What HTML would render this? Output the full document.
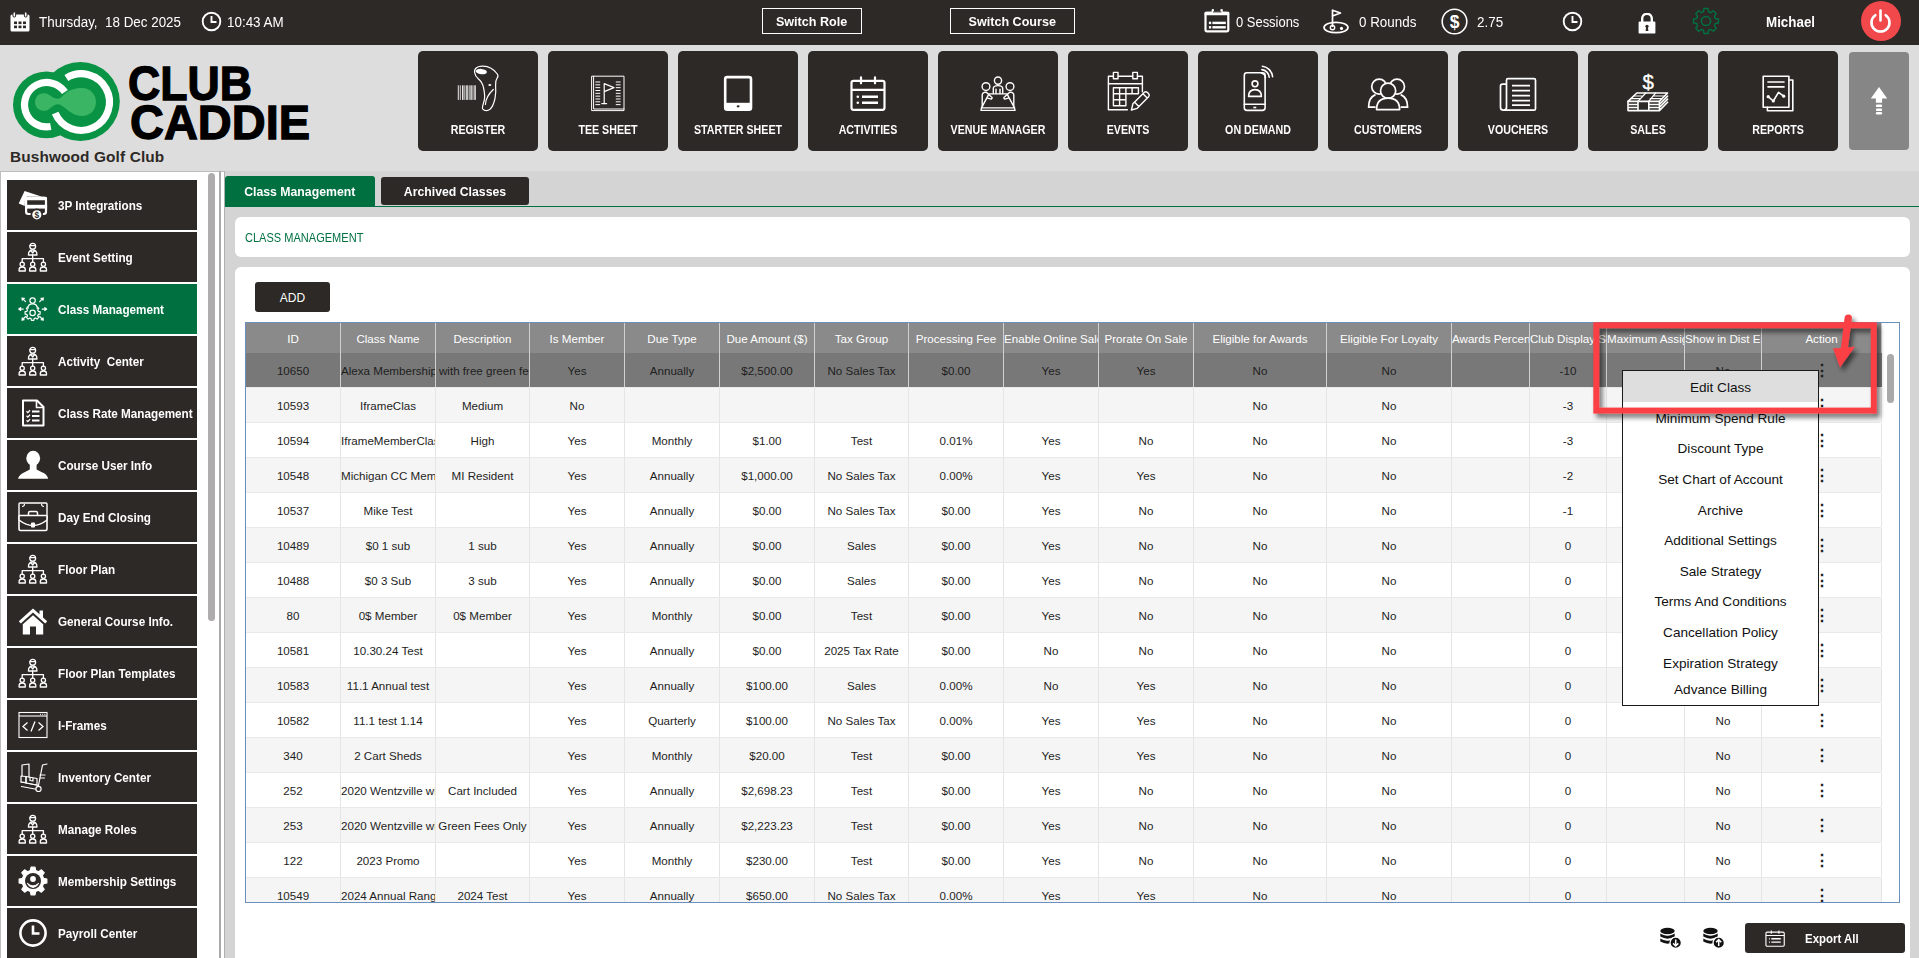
<!DOCTYPE html><html lang="en"><head><meta charset="utf-8"><title>Club Caddie - Class Management</title><style>
*{box-sizing:border-box;margin:0;padding:0}
html,body{width:1919px;height:958px;overflow:hidden}
body{background:#dddddd;font-family:"Liberation Sans",sans-serif;color:#1e1e1e;position:relative}
.abs{position:absolute}
.topbar{position:absolute;left:0;top:0;width:1919px;height:45px;background:#2d2926;color:#fff}
.tb-t{position:absolute;top:0;height:45px;line-height:45px;font-size:14px;color:#fff;white-space:pre;transform:scaleX(.957);transform-origin:0 50%}
.tb-btn{position:absolute;top:8px;height:26px;border:1px solid #fff;color:#fff;font-weight:700;font-size:13.6px;text-align:center;line-height:26px;white-space:nowrap}
.tb-btn span{display:inline-block;transform:scaleX(.925)}
.nav{position:absolute;top:51px;width:120px;height:100px;background:#2d2926;border-radius:5px;color:#fff}
.nav span{position:absolute;left:-20px;right:-20px;top:71px;text-align:center;font-size:13px;font-weight:700;line-height:16px;transform:scaleX(.82)}
.nav svg{position:absolute;left:0;top:0}
.side{position:absolute;left:0;top:171px;width:224px;height:790px;background:#fff;border:1px solid #bdbdbd;border-right:none}
.si{position:absolute;left:7px;width:190px;height:50px;background:#2d2926;color:#fff;font-weight:700;font-size:13px;line-height:51px;padding-left:51px;white-space:nowrap}
.si.act{background:#007041}
.si svg{position:absolute;left:11px;top:10px}
.si b{display:inline-block;transform:scaleX(.9);transform-origin:0 50%}
.content{position:absolute;left:225px;top:171px;width:1694px;height:787px;background:#d4d4d4}
.tab span{display:inline-block;transform:scaleX(.93)}
.tab{position:absolute;top:176px;height:31px;color:#fff;font-weight:700;white-space:nowrap;font-size:13.2px;line-height:32px;text-align:center;border-radius:3px 3px 0 0}
.panel{position:absolute;background:#fff;border-radius:6px}
table{border-collapse:collapse}
.grid{position:absolute;left:245px;top:322px;width:1655px;height:581px;border:1px solid #6c8fbe;background:#fff;overflow:hidden}
.row{position:absolute;left:0;height:35px;width:1635px}
.c{position:absolute;top:0;height:100%;overflow:hidden;white-space:nowrap;font-size:11.6px;text-align:center;border-right:1px solid #e5e5e5}
.c i{font-style:normal;display:inline-block;min-width:100%;text-align:center}
.hdr .c{color:#fff;border-right:1px solid #d0d0d0;font-size:11.6px}
.menu{position:absolute;left:1622px;top:370px;width:197px;height:336px;background:#fff;border:1px solid #1a1a1a}
.mi{position:absolute;left:0;width:195px;text-align:center;font-size:13.6px;color:#111;height:30px;line-height:32px}
</style></head><body>
<div class="topbar">
<svg class="abs" style="left:10px;top:12px" width="20" height="20" viewBox="0 0 20 20"><rect x="0.5" y="2.5" width="19" height="17" rx="1.5" fill="#fff"/><rect x="3" y="0" width="2.6" height="5" rx="1" fill="#fff" stroke="#2d2926" stroke-width="1"/><rect x="14.4" y="0" width="2.6" height="5" rx="1" fill="#fff" stroke="#2d2926" stroke-width="1"/><g fill="#2d2926"><rect x="4" y="9.5" width="3" height="2.6"/><rect x="8.5" y="9.5" width="3" height="2.6"/><rect x="13" y="9.5" width="3" height="2.6"/><rect x="4" y="13.6" width="3" height="2.6"/><rect x="8.5" y="13.6" width="3" height="2.6"/><rect x="13" y="13.6" width="3" height="2.6"/></g></svg>
<div class="tb-t" style="left:39px">Thursday,  18 Dec 2025</div>
<svg class="abs" style="left:201px;top:11px" width="21" height="21" viewBox="0 0 21 21"><circle cx="10.5" cy="10.5" r="8.8" fill="none" stroke="#fff" stroke-width="1.9"/><path d="M10.5 5 V11 H15.5" fill="none" stroke="#fff" stroke-width="1.9"/></svg>
<div class="tb-t" style="left:227px">10:43 AM</div>
<div class="tb-btn" style="left:762px;width:100px"><span>Switch Role</span></div>
<div class="tb-btn" style="left:950px;width:125px"><span>Switch Course</span></div>
<svg class="abs" style="left:1203px;top:9px" width="27" height="24" viewBox="0 0 27 24"><rect x="2.5" y="3.8" width="22.8" height="18.6" rx="1.6" fill="none" stroke="#fff" stroke-width="2.2"/><rect x="1.5" y="2.7" width="24.8" height="3.6" rx="1" fill="#fff"/><rect x="8.6" y="0" width="2.4" height="5.6" rx="1" fill="#fff"/><rect x="17.4" y="0" width="2.4" height="5.6" rx="1" fill="#fff"/><path d="M10 2.9 H18.4" stroke="#2d2926" stroke-width="1"/><rect x="5.9" y="12.7" width="2.3" height="2.4" fill="#fff"/><rect x="9.4" y="12.7" width="13.4" height="2.4" fill="#fff"/><rect x="5.9" y="17.1" width="2.3" height="2.4" fill="#fff"/><rect x="9.4" y="17.1" width="13.4" height="2.4" fill="#fff"/></svg>
<div class="tb-t" style="left:1236px;transform:scaleX(.925)">0 Sessions</div>
<svg class="abs" style="left:1322px;top:9px" width="28" height="25" viewBox="0 0 28 25"><ellipse cx="14" cy="18.5" rx="12" ry="5.2" fill="none" stroke="#fff" stroke-width="1.7"/><path d="M10.5 18 V1.2 L18.5 4 L10.5 7" fill="none" stroke="#fff" stroke-width="1.7" stroke-linejoin="round"/><circle cx="10.5" cy="18.6" r="2.2" fill="none" stroke="#fff" stroke-width="1.4"/><circle cx="19.5" cy="19.4" r="1.6" fill="#fff"/></svg>
<div class="tb-t" style="left:1359px">0 Rounds</div>
<svg class="abs" style="left:1441px;top:8px" width="27" height="27" viewBox="0 0 27 27"><circle cx="13.5" cy="13.5" r="12.3" fill="none" stroke="#fff" stroke-width="1.6"/><text x="13.5" y="19.8" text-anchor="middle" font-family="Liberation Sans,sans-serif" font-weight="700" font-size="17.5" fill="#fff">$</text></svg>
<div class="tb-t" style="left:1477px">2.75</div>
<svg class="abs" style="left:1562px;top:11px" width="21" height="21" viewBox="0 0 21 21"><circle cx="10.5" cy="10.5" r="8.8" fill="none" stroke="#fff" stroke-width="1.9"/><path d="M10.5 5 V11 H15.5" fill="none" stroke="#fff" stroke-width="1.9"/></svg>
<svg class="abs" style="left:1638px;top:13px" width="18" height="21" viewBox="0 0 18 21"><path d="M4.2 9 V5.6 A4.8 4.8 0 0 1 13.8 5.6 V9" fill="none" stroke="#fff" stroke-width="2.4"/><rect x="0.6" y="8.6" width="16.8" height="12" rx="1.2" fill="#fff"/><circle cx="9" cy="13.3" r="1.6" fill="#2d2926"/><path d="M8.2 13.5 L7.6 18 H10.4 L9.8 13.5 Z" fill="#2d2926"/></svg>
<svg class="abs" style="left:1692px;top:7px" width="28" height="28" viewBox="0 0 28 28"><path d="M11.39 4.76 L11.93 1.57 L16.07 1.57 L16.61 4.76 L18.69 5.62 L21.33 3.75 L24.25 6.67 L22.38 9.31 L23.24 11.39 L26.43 11.93 L26.43 16.07 L23.24 16.61 L22.38 18.69 L24.25 21.33 L21.33 24.25 L18.69 22.38 L16.61 23.24 L16.07 26.43 L11.93 26.43 L11.39 23.24 L9.31 22.38 L6.67 24.25 L3.75 21.33 L5.62 18.69 L4.76 16.61 L1.57 16.07 L1.57 11.93 L4.76 11.39 L5.62 9.31 L3.75 6.67 L6.67 3.75 L9.31 5.62 Z" fill="none" stroke="#007041" stroke-width="1.5" stroke-linejoin="round"/><circle cx="14" cy="14" r="4.6" fill="none" stroke="#007041" stroke-width="1.5"/></svg>
<div class="tb-t" style="left:1766px;font-weight:700;transform:scaleX(.955)">Michael</div>
<div class="abs" style="left:1860.5px;top:1px;width:40px;height:40px;border-radius:50%;background:#f1484c"></div>
<svg class="abs" style="left:1869px;top:8.5px" width="23" height="24" viewBox="0 0 23 24"><path d="M6.3 6.2 A9 9 0 1 0 16.7 6.2" fill="none" stroke="#fff" stroke-width="2.6" stroke-linecap="round"/><path d="M11.5 1.6 V11.5" stroke="#fff" stroke-width="2.6" stroke-linecap="round"/></svg>
</div>
<svg class="abs" style="left:0;top:50px" width="330" height="100" viewBox="0 50 330 100">
<circle cx="46.4" cy="104.8" r="33.4" fill="#099345"/><circle cx="80.3" cy="101.5" r="39.5" fill="#099345"/>
<path d="M64.89 91.97 A22.2 22.2 0 1 0 50.75 126.53" fill="none" stroke="#fff" stroke-width="7.2"/>
<path d="M66.37 78 A28.3 28.3 0 1 1 55.15 113.16" fill="none" stroke="#fff" stroke-width="7.2"/>
<path d="M35 102 C35 95.5 41 92 46.5 93.5 C51 95 53 99 58 98.7 C63 98.5 65 88 82 88 C91 88 96 95 96 102 C96 109 91 116 82 116 C70 116 64 104.5 58 104.3 C53 104.3 51 109 46.5 110.5 C41 112 35 108.5 35 102 Z" fill="#3ab564"/>
<g font-family="Liberation Sans,sans-serif" font-weight="700" font-size="49" fill="#000" stroke="#000" stroke-width="1.3">
<text x="128" y="99.5" textLength="124" lengthAdjust="spacingAndGlyphs">CLUB</text>
<text x="130" y="139.3" textLength="180" lengthAdjust="spacingAndGlyphs">CADDIE</text></g>
</svg>
<div class="abs" style="left:10px;top:147px;font-size:15.4px;font-weight:700;color:#2d2926;line-height:20px;letter-spacing:0.12px">Bushwood Golf Club</div>
<div class="nav" style="left:418px"><svg width="120" height="100" viewBox="0 0 120 100"><g fill="#e8e8e8"><rect x="39.8" y="34.3" width="1" height="14.6"/><rect x="41.8" y="34.3" width="0.9" height="14.6"/><rect x="44" y="34.3" width="1.5" height="14.6"/><rect x="46.4" y="34.3" width="0.9" height="14.6"/><rect x="48.2" y="34.3" width="1.6" height="14.6"/><rect x="50.7" y="34.3" width="0.9" height="14.6"/><rect x="52.4" y="34.3" width="1.4" height="14.6"/><rect x="54.5" y="34.3" width="0.9" height="14.6"/><rect x="56.3" y="34.3" width="1.5" height="14.6"/></g><path d="M56.6 21.5 C56 17.5 59.5 15 65 15.2 C71 15.4 76 18.5 79.3 23 C80.5 24.6 80 26 79 27.3 C77.6 29.2 77.4 31 77.6 34 C77.9 38 78.2 42 77 47.5 C76 52 74.5 56 72 58.3 C70 60 66.5 60.2 64.8 58.2 C63.6 56.6 65.2 53.5 66.2 49.5 C67 46 66.6 41.5 65.6 37 C64.8 33 63 30 60.5 28 C58.5 26.2 57 24.5 56.6 21.5 Z" fill="none" stroke="#fff" stroke-width="1.2" stroke-linejoin="round" stroke-linecap="round"/><ellipse cx="63.3" cy="20.6" rx="5.6" ry="2.7" fill="#fff" transform="rotate(6 63.3 20.6)"/><ellipse cx="71.8" cy="34" rx="1.5" ry="1.1" fill="#fff"/><path d="M75.3 38.5 C71 42.5 67.8 47 67.4 53.5" fill="none" stroke="#fff" stroke-width="1.2" stroke-linejoin="round" stroke-linecap="round"/></svg><span>REGISTER</span></div>
<div class="nav" style="left:548px"><svg width="120" height="100" viewBox="0 0 120 100"><rect x="44" y="25.2" width="32" height="34.4" fill="none" stroke="#fff" stroke-width="1" stroke-linejoin="round" stroke-linecap="round"/><path d="M45.6 25.2 V58 H76" fill="none" stroke="#fff" stroke-width="1" stroke-linejoin="round" stroke-linecap="round"/><path d="M56.2 52.5 V32.6 L66 36.6 L56.2 40.6 M53.8 52.6 H58.6" fill="none" stroke="#fff" stroke-width="1.2" stroke-linejoin="round" stroke-linecap="round"/><g stroke="#fff" stroke-width="1"><path d="M47.4 31 h4.8 M67.8 31 h4.8"/><path d="M47.4 33.83 h4.8 M67.8 33.83 h4.8"/><path d="M47.4 36.66 h4.8 M67.8 36.66 h4.8"/><path d="M47.4 39.49 h4.8 M67.8 39.49 h4.8"/><path d="M47.4 42.32 h4.8 M67.8 42.32 h4.8"/><path d="M47.4 45.15 h4.8 M67.8 45.15 h4.8"/><path d="M47.4 47.98 h4.8 M67.8 47.98 h4.8"/><path d="M47.4 50.81 h4.8 M67.8 50.81 h4.8"/><path d="M47.4 53.64 h4.8 M67.8 53.64 h4.8"/></g></svg><span>TEE SHEET</span></div>
<div class="nav" style="left:678px"><svg width="120" height="100" viewBox="0 0 120 100"><rect x="47.2" y="26.1" width="25.8" height="32.6" rx="2" fill="none" stroke="#fff" stroke-width="2.6"/><rect x="47.2" y="51.8" width="25.8" height="7" fill="#fff"/><ellipse cx="60.1" cy="55.3" rx="1.5" ry="1.1" fill="#2d2926"/></svg><span>STARTER SHEET</span></div>
<div class="nav" style="left:808px"><svg width="120" height="100" viewBox="0 0 120 100"><g transform="translate(40,20.3) scale(1,1)"><rect x="3.5" y="9.5" width="33" height="29" rx="2" fill="none" stroke="#fff" stroke-width="2.2"/><path d="M3.5 18.5 H36.5" stroke="#fff" stroke-width="2.2"/><path d="M13 6 V12 M27 6 V12" stroke="#fff" stroke-width="2.2" stroke-linecap="round"/><path d="M14 25.5 H30 M14 31.5 H30" stroke="#fff" stroke-width="2.4"/><circle cx="9.8" cy="25.5" r="1.3" fill="#fff"/><circle cx="9.8" cy="31.5" r="1.3" fill="#fff"/></g></svg><span>ACTIVITIES</span></div>
<div class="nav" style="left:938px"><svg width="120" height="100" viewBox="0 0 120 100"><g transform="translate(40,20.6) scale(1,1)"><circle cx="20" cy="9" r="3.6" fill="none" stroke="#fff" stroke-width="1.4" stroke-linejoin="round" stroke-linecap="round"/><circle cx="8" cy="15" r="3.9" fill="none" stroke="#fff" stroke-width="1.4" stroke-linejoin="round" stroke-linecap="round"/><circle cx="32" cy="15" r="3.9" fill="none" stroke="#fff" stroke-width="1.4" stroke-linejoin="round" stroke-linecap="round"/><path d="M15.3 22 V17 Q15.3 14 20 14 Q24.7 14 24.7 17 V22 M18 22 V17.5 M22 22 V17.5" fill="none" stroke="#fff" stroke-width="1.4" stroke-linejoin="round" stroke-linecap="round"/><path d="M4.2 35 V24 Q4.2 20.5 8 20.5 L13 25 Q15 26 13.5 27.5 L9.5 26.5 M35.8 35 V24 Q35.8 20.5 32 20.5 L27 25 Q25 26 26.5 27.5 L30.5 26.5" fill="none" stroke="#fff" stroke-width="1.4" stroke-linejoin="round" stroke-linecap="round"/><path d="M11 22.3 H29 L36.5 36.3 H3.5 Z" fill="none" stroke="#fff" stroke-width="1.4" stroke-linejoin="round" stroke-linecap="round"/><path d="M3.5 36.3 L3 38.8 H37 L36.5 36.3" fill="none" stroke="#fff" stroke-width="1.4" stroke-linejoin="round" stroke-linecap="round"/></g></svg><span>VENUE MANAGER</span></div>
<div class="nav" style="left:1068px"><svg width="120" height="100" viewBox="0 0 120 100"><g transform="translate(38.4,19.8) scale(1,1)"><path d="M36 21 V5.5 H2 V39 H21" fill="none" stroke="#fff" stroke-width="1.4" stroke-linejoin="round" stroke-linecap="round"/><path d="M2 13 H36" fill="none" stroke="#fff" stroke-width="1.4" stroke-linejoin="round" stroke-linecap="round"/><rect x="7" y="1.6" width="4.6" height="6.4" fill="#2d2926"  stroke="#fff" stroke-width="1.4" stroke-linejoin="round" stroke-linecap="round"/><rect x="26.4" y="1.6" width="4.6" height="6.4" fill="#2d2926"  stroke="#fff" stroke-width="1.4" stroke-linejoin="round" stroke-linecap="round"/><path d="M7 17 H32 V23 H19.5 V35 H7 Z M7 23 H19.5 M7 29 H19.5 M13.2 17 V35 M19.5 17 V23 M25.7 17 V23" fill="none" stroke="#fff" stroke-width="1.4" stroke-linejoin="round" stroke-linecap="round"/><path d="M26.5 33 L38 21.5 Q39.5 20.3 41 21.7 L42.3 23 Q43.5 24.5 42.2 26 L30.8 37.5 L25 39.2 Z M28.3 31.4 L32.4 35.6 M36.6 23 L40.8 27.2" fill="none" stroke="#fff" stroke-width="1.4" stroke-linejoin="round" stroke-linecap="round"/></g></svg><span>EVENTS</span></div>
<div class="nav" style="left:1198px"><svg width="120" height="100" viewBox="0 0 120 100"><rect x="46.3" y="21.8" width="20.8" height="37.6" rx="2.6" fill="none" stroke="#fff" stroke-width="1.6" stroke-linejoin="round" stroke-linecap="round"/><path d="M46.3 53.3 H67.1" fill="none" stroke="#fff" stroke-width="1.6" stroke-linejoin="round" stroke-linecap="round"/><path d="M55.3 56.5 H58.3" stroke="#fff" stroke-width="1.6"/><circle cx="57" cy="32.8" r="2.9" fill="none" stroke="#fff" stroke-width="1.6" stroke-linejoin="round" stroke-linecap="round"/><path d="M50.6 45.4 Q50.6 38.6 57 38.6 Q63.4 38.6 63.4 45.4 Z" fill="none" stroke="#fff" stroke-width="1.6" stroke-linejoin="round" stroke-linecap="round"/><path d="M63.6 22.3 A4.6 4.6 0 0 1 67.4 26.8 M63.9 18.6 A8.3 8.3 0 0 1 71.2 26.2 M64.4 15.2 A11.8 11.8 0 0 1 74.6 25.6" fill="none" stroke="#fff" stroke-width="1.6" stroke-linejoin="round" stroke-linecap="round"/></svg><span>ON DEMAND</span></div>
<div class="nav" style="left:1328px"><svg width="120" height="100" viewBox="0 0 120 100"><circle cx="51.2" cy="35.6" r="7.5" fill="#2d2926" stroke="#fff" stroke-width="1.7" stroke-linejoin="round"/><circle cx="69" cy="35.6" r="7.5" fill="#2d2926" stroke="#fff" stroke-width="1.7" stroke-linejoin="round"/><path d="M47.5 56.2 H40.6 Q40.6 46.5 47.5 43.6 M72.7 56.2 H79.6 Q79.6 46.5 72.7 43.6" fill="none" stroke="#fff" stroke-width="1.7" stroke-linejoin="round"/><circle cx="60.1" cy="39.8" r="7.6" fill="#2d2926" stroke="#fff" stroke-width="1.7" stroke-linejoin="round"/><path d="M48.6 58.6 Q48.6 47.2 60.1 47.2 Q71.6 47.2 71.6 58.6 Z" fill="#2d2926" stroke="#fff" stroke-width="1.7" stroke-linejoin="round"/></svg><span>CUSTOMERS</span></div>
<div class="nav" style="left:1458px"><svg width="120" height="100" viewBox="0 0 120 100"><g transform="translate(40,21.2) scale(1,1)"><path d="M8 12 H4.5 Q2.5 12 2.5 14 V35 Q2.5 38 5.5 38 Q8.5 38 8.5 35 V8 Q8.5 6.5 10 6.5 H36 Q37.5 6.5 37.5 8 V36.5 Q37.5 38 36 38 H5.5" fill="none" stroke="#fff"  stroke-linejoin="round" stroke-linecap="round" stroke-width="1.7"/><path d="M14 13.5 H32 M14 18.5 H32 M14 23.5 H32 M14 28.5 H32 M14 33 H32" stroke="#fff" stroke-width="1.7"/></g></svg><span>VOUCHERS</span></div>
<div class="nav" style="left:1588px"><svg width="120" height="100" viewBox="0 0 120 100"><text x="60.3" y="38" text-anchor="middle" font-family="Liberation Sans,sans-serif" font-size="20.5" fill="#fff" stroke="#fff" stroke-width="0.35">$</text><path d="M48.8 42 H79.6 L71.4 50.4 H40 Z" fill="none" stroke="#fff" stroke-width="1.6" stroke-linejoin="round" stroke-linecap="round"/><path d="M57.8 42 L50 50.4 M67.6 42 L60.8 50.4 M46 45 H55 M43.4 47.7 H52.4 M64.8 45 H76.6 M62.2 47.7 H74" fill="none" stroke="#fff" stroke-width="1.2" stroke-linejoin="round" stroke-linecap="round"/><path d="M40 50.4 V59.6 H71.4 L79.6 51.2 M40 53.5 H50 M40 56.5 H50 M60.8 53.5 H71.4 L79.6 45.1 M60.8 56.5 H71.4 L79.6 48.1 M50 50.4 V59.6 M60.8 50.4 V59.6 M71.4 50.4 V59.6" fill="none" stroke="#fff" stroke-width="1.6" stroke-linejoin="round" stroke-linecap="round"/></svg><span>SALES</span></div>
<div class="nav" style="left:1718px"><svg width="120" height="100" viewBox="0 0 120 100"><path d="M49.4 56.2 V59.8 H74.8 V29 H71" fill="none" stroke="#fff" stroke-width="1.6" stroke-linejoin="round" stroke-linecap="round"/><rect x="45.2" y="25.2" width="25.7" height="31" fill="none" stroke="#fff" stroke-width="1.6" stroke-linejoin="round" stroke-linecap="round"/><path d="M49.4 31 H66.6 M49.4 35.9 H66.6" stroke="#fff" stroke-width="1.6"/><path d="M50.2 45.7 L55.3 50 L60.5 41.4 L65.7 45.2" fill="none" stroke="#fff" stroke-width="1.6" stroke-linejoin="round" stroke-linecap="round"/><circle cx="50.2" cy="45.7" r="1.6" fill="#fff"/><circle cx="55.3" cy="50" r="1.6" fill="#fff"/><circle cx="65.7" cy="45.2" r="1.6" fill="#fff"/></svg><span>REPORTS</span></div>
<div class="abs" style="left:1849px;top:52px;width:60px;height:98px;background:#868686;border-radius:4px"></div>
<svg class="abs" style="left:1869px;top:86px" width="20" height="30" viewBox="0 0 20 30"><path d="M10 0.9 L18.2 12.4 H13.1 V16.8 H6.9 V12.4 H1.8 Z" fill="#fff"/><rect x="6.9" y="18.6" width="6.2" height="2.5" rx="1.2" fill="#fff"/><rect x="6.9" y="22.4" width="6.2" height="2.5" rx="1.2" fill="#fff"/><rect x="6.9" y="26" width="6.2" height="2.5" rx="1.2" fill="#fff"/></svg>
<div class="side"></div>
<div class="si" style="top:180px"><svg width="30" height="30" viewBox="0 0 30 30"><path d="M0.7 13.4 L6.6 0.9 L24.1 6.7 L9 6.5 L7 8.5 L6.8 16 Z" fill="#fff"/><rect x="8.1" y="7.8" width="19.9" height="16.2" rx="2.2" fill="none" stroke="#fff" stroke-width="2.2"/><rect x="7" y="6.7" width="22.1" height="3.6" rx="1.5" fill="#fff"/><rect x="7" y="14.8" width="22.1" height="3.8" fill="#fff"/><circle cx="18.8" cy="24.8" r="6.2" fill="#2d2926"/><circle cx="18.8" cy="24.8" r="4.6" fill="#fff"/><text x="18.8" y="27.8" text-anchor="middle" font-family="Liberation Sans,sans-serif" font-weight="700" font-size="8.4" fill="#2d2926">$</text></svg><b>3P Integrations</b></div>
<div class="si" style="top:232px"><svg width="30" height="30" viewBox="0 0 30 30"><circle cx="14.7" cy="4.3" r="2.9" fill="none" stroke="#fff" stroke-width="1.3" stroke-linejoin="round" stroke-linecap="round"/><path d="M12 3.6 H17.4" fill="none" stroke="#fff" stroke-width="1.3" stroke-linejoin="round" stroke-linecap="round"/><path d="M10.4 13 Q10.4 8 14.7 8 Q19 8 19 13 Z M13 8.6 L14.7 11 L16.4 8.6" fill="none" stroke="#fff" stroke-width="1.3" stroke-linejoin="round" stroke-linecap="round"/><path d="M14.7 13 V20 M4.2 20.5 V16.6 H25.4 V20.5" fill="none" stroke="#fff" stroke-width="1.3" stroke-linejoin="round" stroke-linecap="round"/><circle cx="4.2" cy="22.3" r="2.1" fill="none" stroke="#fff" stroke-width="1.3" stroke-linejoin="round" stroke-linecap="round"/><path d="M1.1 29 V27.5 Q1.1 25 4.2 25 Q7.3 25 7.3 27.5 V29 Z" fill="none" stroke="#fff" stroke-width="1.3" stroke-linejoin="round" stroke-linecap="round"/><circle cx="14.7" cy="22.3" r="2.1" fill="none" stroke="#fff" stroke-width="1.3" stroke-linejoin="round" stroke-linecap="round"/><path d="M11.6 29 V27.5 Q11.6 25 14.7 25 Q17.8 25 17.8 27.5 V29 Z" fill="none" stroke="#fff" stroke-width="1.3" stroke-linejoin="round" stroke-linecap="round"/><circle cx="25.4" cy="22.3" r="2.1" fill="none" stroke="#fff" stroke-width="1.3" stroke-linejoin="round" stroke-linecap="round"/><path d="M22.3 29 V27.5 Q22.3 25 25.4 25 Q28.5 25 28.5 27.5 V29 Z" fill="none" stroke="#fff" stroke-width="1.3" stroke-linejoin="round" stroke-linecap="round"/></svg><b>Event Setting</b></div>
<div class="si act" style="top:284px"><svg width="30" height="30" viewBox="0 0 30 30"><path d="M13.04 13.21 L13.41 11.39 L15.79 11.39 L16.16 13.21 L17.52 13.78 L19.07 12.75 L20.75 14.43 L19.72 15.98 L20.29 17.34 L22.11 17.71 L22.11 20.09 L20.29 20.46 L19.72 21.82 L20.75 23.37 L19.07 25.05 L17.52 24.02 L16.16 24.59 L15.79 26.41 L13.41 26.41 L13.04 24.59 L11.68 24.02 L10.13 25.05 L8.45 23.37 L9.48 21.82 L8.91 20.46 L7.09 20.09 L7.09 17.71 L8.91 17.34 L9.48 15.98 L8.45 14.43 L10.13 12.75 L11.68 13.78 Z" fill="none" stroke="#fff" stroke-width="1.2" stroke-linejoin="round" stroke-linecap="round"/><circle cx="14.6" cy="18.9" r="2.7" fill="none" stroke="#fff" stroke-width="1.2" stroke-linejoin="round" stroke-linecap="round"/><path d="M9.6 15.2 Q9.6 9.7 14.6 9.7 Q19.6 9.7 19.6 15.2 Z" fill="#007041" stroke="none"/><path d="M9.9 14.6 Q9.9 9.8 14.6 9.8 Q19.3 9.8 19.3 14.6" fill="none" stroke="#fff" stroke-width="1.2" stroke-linejoin="round" stroke-linecap="round"/><circle cx="14.6" cy="6.6" r="2.7" fill="none" stroke="#fff" stroke-width="1.2" stroke-linejoin="round" stroke-linecap="round"/><path d="M7.60 7.60 L4.00 4.00 M4.00 4.00 L6.28 4.33 M4.00 4.00 L4.33 6.28 M21.70 7.60 L25.30 4.00 M25.30 4.00 L24.97 6.28 M25.30 4.00 L23.02 4.33 M5.20 15.10 L0.80 15.10 M0.80 15.10 L2.64 13.72 M0.80 15.10 L2.64 16.48 M24.20 15.10 L28.60 15.10 M28.60 15.10 L26.76 16.48 M28.60 15.10 L26.76 13.72 M7.60 22.50 L4.00 26.10 M4.00 26.10 L4.33 23.82 M4.00 26.10 L6.28 25.77 M21.70 22.50 L25.30 26.10 M25.30 26.10 L23.02 25.77 M25.30 26.10 L24.97 23.82 " fill="none" stroke="#fff" stroke-width="1.2" stroke-linejoin="round" stroke-linecap="round"/></svg><b>Class Management</b></div>
<div class="si" style="top:336px"><svg width="30" height="30" viewBox="0 0 30 30"><circle cx="14.7" cy="4.3" r="2.9" fill="none" stroke="#fff" stroke-width="1.3" stroke-linejoin="round" stroke-linecap="round"/><path d="M12 3.6 H17.4" fill="none" stroke="#fff" stroke-width="1.3" stroke-linejoin="round" stroke-linecap="round"/><path d="M10.4 13 Q10.4 8 14.7 8 Q19 8 19 13 Z M13 8.6 L14.7 11 L16.4 8.6" fill="none" stroke="#fff" stroke-width="1.3" stroke-linejoin="round" stroke-linecap="round"/><path d="M14.7 13 V20 M4.2 20.5 V16.6 H25.4 V20.5" fill="none" stroke="#fff" stroke-width="1.3" stroke-linejoin="round" stroke-linecap="round"/><circle cx="4.2" cy="22.3" r="2.1" fill="none" stroke="#fff" stroke-width="1.3" stroke-linejoin="round" stroke-linecap="round"/><path d="M1.1 29 V27.5 Q1.1 25 4.2 25 Q7.3 25 7.3 27.5 V29 Z" fill="none" stroke="#fff" stroke-width="1.3" stroke-linejoin="round" stroke-linecap="round"/><circle cx="14.7" cy="22.3" r="2.1" fill="none" stroke="#fff" stroke-width="1.3" stroke-linejoin="round" stroke-linecap="round"/><path d="M11.6 29 V27.5 Q11.6 25 14.7 25 Q17.8 25 17.8 27.5 V29 Z" fill="none" stroke="#fff" stroke-width="1.3" stroke-linejoin="round" stroke-linecap="round"/><circle cx="25.4" cy="22.3" r="2.1" fill="none" stroke="#fff" stroke-width="1.3" stroke-linejoin="round" stroke-linecap="round"/><path d="M22.3 29 V27.5 Q22.3 25 25.4 25 Q28.5 25 28.5 27.5 V29 Z" fill="none" stroke="#fff" stroke-width="1.3" stroke-linejoin="round" stroke-linecap="round"/></svg><b>Activity&nbsp; Center</b></div>
<div class="si" style="top:388px"><svg width="30" height="30" viewBox="0 0 30 30"><path d="M5 2.5 H19 L25.5 9 V27.5 H5 Z" fill="none" stroke="#fff" stroke-width="2" stroke-linejoin="round"/><path d="M18.5 3 V9.5 H25" fill="none" stroke="#fff" stroke-width="1.6"/><path d="M14 13.5 H21.5 M14 18 H21.5 M14 22.5 H21.5" stroke="#fff" stroke-width="1.8"/><path d="M8.5 13.3 L9.8 14.6 L12 12.2 M8.5 17.8 L9.8 19.1 L12 16.7 M8.5 22.3 L9.8 23.6 L12 21.2" fill="none" stroke="#fff" stroke-width="1.3"/></svg><b>Class Rate Management</b></div>
<div class="si" style="top:440px"><svg width="30" height="30" viewBox="0 0 30 30"><ellipse cx="15.2" cy="8.3" rx="6.9" ry="7.5" fill="#fff"/><path d="M0 28.8 Q1.5 24 7 22 L11.8 19.5 V14 H18.6 V19.5 L23.4 22 Q29 24 30.3 28.8 Z" fill="#fff"/></svg><b>Course User Info</b></div>
<div class="si" style="top:492px"><svg width="30" height="30" viewBox="0 0 30 30"><rect x="1" y="1" width="28" height="17" rx="1" fill="none" stroke="#fff" stroke-width="1.4"/><path d="M4 4.5 Q6.5 4.5 6.5 2 M26 4.5 Q23.5 4.5 23.5 2" fill="none" stroke="#fff" stroke-width="1.1"/><path d="M2 13.5 H28 Q29 13.5 29 14.5 V27 Q29 28.5 27.5 28.5 H2.5 Q1 28.5 1 27 V14.5 Q1 13.5 2 13.5 Z" fill="#2d2926" stroke="#fff" stroke-width="1.6"/><path d="M10.5 13.5 V11 Q10.5 9.5 12 9.5 H18 Q19.5 9.5 19.5 11 V13.5" fill="none" stroke="#fff" stroke-width="1.5"/><path d="M1 18 Q8 23.5 15 23.5 Q22 23.5 29 18" fill="none" stroke="#fff" stroke-width="1.5"/><rect x="13" y="20.5" width="4" height="5" rx="0.8" fill="#fff"/></svg><b>Day End Closing</b></div>
<div class="si" style="top:544px"><svg width="30" height="30" viewBox="0 0 30 30"><circle cx="14.7" cy="4.3" r="2.9" fill="none" stroke="#fff" stroke-width="1.3" stroke-linejoin="round" stroke-linecap="round"/><path d="M12 3.6 H17.4" fill="none" stroke="#fff" stroke-width="1.3" stroke-linejoin="round" stroke-linecap="round"/><path d="M10.4 13 Q10.4 8 14.7 8 Q19 8 19 13 Z M13 8.6 L14.7 11 L16.4 8.6" fill="none" stroke="#fff" stroke-width="1.3" stroke-linejoin="round" stroke-linecap="round"/><path d="M14.7 13 V20 M4.2 20.5 V16.6 H25.4 V20.5" fill="none" stroke="#fff" stroke-width="1.3" stroke-linejoin="round" stroke-linecap="round"/><circle cx="4.2" cy="22.3" r="2.1" fill="none" stroke="#fff" stroke-width="1.3" stroke-linejoin="round" stroke-linecap="round"/><path d="M1.1 29 V27.5 Q1.1 25 4.2 25 Q7.3 25 7.3 27.5 V29 Z" fill="none" stroke="#fff" stroke-width="1.3" stroke-linejoin="round" stroke-linecap="round"/><circle cx="14.7" cy="22.3" r="2.1" fill="none" stroke="#fff" stroke-width="1.3" stroke-linejoin="round" stroke-linecap="round"/><path d="M11.6 29 V27.5 Q11.6 25 14.7 25 Q17.8 25 17.8 27.5 V29 Z" fill="none" stroke="#fff" stroke-width="1.3" stroke-linejoin="round" stroke-linecap="round"/><circle cx="25.4" cy="22.3" r="2.1" fill="none" stroke="#fff" stroke-width="1.3" stroke-linejoin="round" stroke-linecap="round"/><path d="M22.3 29 V27.5 Q22.3 25 25.4 25 Q28.5 25 28.5 27.5 V29 Z" fill="none" stroke="#fff" stroke-width="1.3" stroke-linejoin="round" stroke-linecap="round"/></svg><b>Floor Plan</b></div>
<div class="si" style="top:596px"><svg width="30" height="30" viewBox="0 0 30 30"><path d="M15 2.5 L0.8 15.2 L2.8 17.4 L15 6.6 L27.2 17.4 L29.2 15.2 L25 11.4 V4.5 H21.5 V8.3 Z" fill="#fff"/><path d="M15 9.3 L4.8 18.3 V28.5 H12 V20.5 H18 V28.5 H25.2 V18.3 Z" fill="#fff"/></svg><b>General Course Info.</b></div>
<div class="si" style="top:648px"><svg width="30" height="30" viewBox="0 0 30 30"><circle cx="14.7" cy="4.3" r="2.9" fill="none" stroke="#fff" stroke-width="1.3" stroke-linejoin="round" stroke-linecap="round"/><path d="M12 3.6 H17.4" fill="none" stroke="#fff" stroke-width="1.3" stroke-linejoin="round" stroke-linecap="round"/><path d="M10.4 13 Q10.4 8 14.7 8 Q19 8 19 13 Z M13 8.6 L14.7 11 L16.4 8.6" fill="none" stroke="#fff" stroke-width="1.3" stroke-linejoin="round" stroke-linecap="round"/><path d="M14.7 13 V20 M4.2 20.5 V16.6 H25.4 V20.5" fill="none" stroke="#fff" stroke-width="1.3" stroke-linejoin="round" stroke-linecap="round"/><circle cx="4.2" cy="22.3" r="2.1" fill="none" stroke="#fff" stroke-width="1.3" stroke-linejoin="round" stroke-linecap="round"/><path d="M1.1 29 V27.5 Q1.1 25 4.2 25 Q7.3 25 7.3 27.5 V29 Z" fill="none" stroke="#fff" stroke-width="1.3" stroke-linejoin="round" stroke-linecap="round"/><circle cx="14.7" cy="22.3" r="2.1" fill="none" stroke="#fff" stroke-width="1.3" stroke-linejoin="round" stroke-linecap="round"/><path d="M11.6 29 V27.5 Q11.6 25 14.7 25 Q17.8 25 17.8 27.5 V29 Z" fill="none" stroke="#fff" stroke-width="1.3" stroke-linejoin="round" stroke-linecap="round"/><circle cx="25.4" cy="22.3" r="2.1" fill="none" stroke="#fff" stroke-width="1.3" stroke-linejoin="round" stroke-linecap="round"/><path d="M22.3 29 V27.5 Q22.3 25 25.4 25 Q28.5 25 28.5 27.5 V29 Z" fill="none" stroke="#fff" stroke-width="1.3" stroke-linejoin="round" stroke-linecap="round"/></svg><b>Floor Plan Templates</b></div>
<div class="si" style="top:700px"><svg width="30" height="30" viewBox="0 0 30 30"><rect x="1" y="2.5" width="28" height="25" fill="none" stroke="#fff" stroke-width="1.1"/><path d="M1 6 H29" stroke="#fff" stroke-width="1.1"/><path d="M22 4.3 h1 M24.2 4.3 h1 M26.4 4.3 h1" stroke="#fff" stroke-width="1"/><path d="M9.5 12.5 L5 16.5 L9.5 20.5 M20.5 12.5 L25 16.5 L20.5 20.5 M17 11.5 L13 21.5" fill="none" stroke="#fff" stroke-width="1.3"/></svg><b>I-Frames</b></div>
<div class="si" style="top:752px"><svg width="30" height="30" viewBox="0 0 30 30"><path d="M29 2 L24.5 3 L20 26" fill="none" stroke="#fff" stroke-width="1.2" stroke-linejoin="round" stroke-linecap="round"/><path d="M3 20 L20.5 23.5 M3.5 24.5 L19.5 27.5" fill="none" stroke="#fff" stroke-width="1.2" stroke-linejoin="round" stroke-linecap="round"/><path d="M4 14 V3 L11 2 V15" fill="none" stroke="#fff" stroke-width="1.2" stroke-linejoin="round" stroke-linecap="round"/><path d="M8 14.5 L19 16.5 V23 L8 21 Z M12 15.2 V18.5 L15 19 V15.8" fill="none" stroke="#fff" stroke-width="1.2" stroke-linejoin="round" stroke-linecap="round"/><path d="M3 14 L8 14.5 V20.5 L3 20 Z" fill="none" stroke="#fff" stroke-width="1.2" stroke-linejoin="round" stroke-linecap="round"/><circle cx="20.5" cy="27" r="2.6" fill="#2d2926" stroke="#fff" stroke-width="1.2"/><path d="M22 13 H27 M22 16 H26.5" fill="none" stroke="#fff" stroke-width="1.2" stroke-linejoin="round" stroke-linecap="round"/></svg><b>Inventory Center</b></div>
<div class="si" style="top:804px"><svg width="30" height="30" viewBox="0 0 30 30"><circle cx="14.7" cy="4.3" r="2.9" fill="none" stroke="#fff" stroke-width="1.3" stroke-linejoin="round" stroke-linecap="round"/><path d="M12 3.6 H17.4" fill="none" stroke="#fff" stroke-width="1.3" stroke-linejoin="round" stroke-linecap="round"/><path d="M10.4 13 Q10.4 8 14.7 8 Q19 8 19 13 Z M13 8.6 L14.7 11 L16.4 8.6" fill="none" stroke="#fff" stroke-width="1.3" stroke-linejoin="round" stroke-linecap="round"/><path d="M14.7 13 V20 M4.2 20.5 V16.6 H25.4 V20.5" fill="none" stroke="#fff" stroke-width="1.3" stroke-linejoin="round" stroke-linecap="round"/><circle cx="4.2" cy="22.3" r="2.1" fill="none" stroke="#fff" stroke-width="1.3" stroke-linejoin="round" stroke-linecap="round"/><path d="M1.1 29 V27.5 Q1.1 25 4.2 25 Q7.3 25 7.3 27.5 V29 Z" fill="none" stroke="#fff" stroke-width="1.3" stroke-linejoin="round" stroke-linecap="round"/><circle cx="14.7" cy="22.3" r="2.1" fill="none" stroke="#fff" stroke-width="1.3" stroke-linejoin="round" stroke-linecap="round"/><path d="M11.6 29 V27.5 Q11.6 25 14.7 25 Q17.8 25 17.8 27.5 V29 Z" fill="none" stroke="#fff" stroke-width="1.3" stroke-linejoin="round" stroke-linecap="round"/><circle cx="25.4" cy="22.3" r="2.1" fill="none" stroke="#fff" stroke-width="1.3" stroke-linejoin="round" stroke-linecap="round"/><path d="M22.3 29 V27.5 Q22.3 25 25.4 25 Q28.5 25 28.5 27.5 V29 Z" fill="none" stroke="#fff" stroke-width="1.3" stroke-linejoin="round" stroke-linecap="round"/></svg><b>Manage Roles</b></div>
<div class="si" style="top:856px"><svg width="30" height="30" viewBox="0 0 30 30"><path d="M12.31 4.54 L13.03 1.14 L16.97 1.14 L17.69 4.54 L20.50 5.70 L23.41 3.80 L26.20 6.59 L24.30 9.50 L25.46 12.31 L28.86 13.03 L28.86 16.97 L25.46 17.69 L24.30 20.50 L26.20 23.41 L23.41 26.20 L20.50 24.30 L17.69 25.46 L16.97 28.86 L13.03 28.86 L12.31 25.46 L9.50 24.30 L6.59 26.20 L3.80 23.41 L5.70 20.50 L4.54 17.69 L1.14 16.97 L1.14 13.03 L4.54 12.31 L5.70 9.50 L3.80 6.59 L6.59 3.80 L9.50 5.70 Z" fill="#fff" stroke="#fff" stroke-width="1.2" stroke-linejoin="round"/><circle cx="15" cy="15" r="8" fill="#2d2926"/><circle cx="15" cy="13" r="2.9" fill="#fff"/><path d="M9.3 17.3 Q15 22.5 20.7 17.3 Q18.7 21.4 15 21.4 Q11.3 21.4 9.3 17.3 Z" fill="#fff" stroke="#fff" stroke-width="1"/></svg><b>Membership Settings</b></div>
<div class="si" style="top:908px"><svg width="30" height="30" viewBox="0 0 30 30"><circle cx="15" cy="15" r="12.6" fill="none" stroke="#fff" stroke-width="2.6"/><path d="M15 7.5 V15.5 H21.5" fill="none" stroke="#fff" stroke-width="2.6"/></svg><b>Payroll Center</b></div>
<div class="abs" style="left:208px;top:173px;width:7px;height:448px;background:#aeacac;border-radius:4px"></div>
<div class="abs" style="left:219px;top:171px;width:2px;height:787px;background:#aaa9a9"></div>
<div class="abs" style="left:224px;top:171px;width:1px;height:787px;background:#b0b0b0"></div>
<div class="content"></div>
<div class="abs" style="left:225px;top:206px;width:1694px;height:1px;background:#007041"></div>
<div class="tab" style="left:225px;width:150px;background:#007041"><span>Class Management</span></div>
<div class="tab" style="left:381px;width:148px;background:#2d2926;top:177px;height:28px;line-height:29px;border-radius:3px"><span>Archived Classes</span></div>
<div class="panel" style="left:235px;top:217px;width:1675px;height:40px"></div>
<div class="abs" style="left:245px;top:218px;line-height:40px;font-size:12.5px;color:#007041;transform:scaleX(.883);transform-origin:0 50%">CLASS MANAGEMENT</div>
<div class="panel" style="left:235px;top:267px;width:1675px;height:700px"></div>
<div class="abs" style="left:255px;top:282px;width:75px;height:30px;background:#2d2926;border-radius:3px;color:#fff;font-size:12px;text-align:center;line-height:32px">ADD</div>
<div class="grid">
<div class="row hdr" style="top:0;height:30px;line-height:31px;background:#8a8a8a">
<div class="c" style="left:0px;width:95px;"><i>ID</i></div>
<div class="c" style="left:95px;width:95px;"><i>Class Name</i></div>
<div class="c" style="left:190px;width:94px;"><i>Description</i></div>
<div class="c" style="left:284px;width:95px;"><i>Is Member</i></div>
<div class="c" style="left:379px;width:95px;"><i>Due Type</i></div>
<div class="c" style="left:474px;width:95px;"><i>Due Amount ($)</i></div>
<div class="c" style="left:569px;width:94px;"><i>Tax Group</i></div>
<div class="c" style="left:663px;width:95px;"><i>Processing Fee</i></div>
<div class="c" style="left:758px;width:95px;"><i>Enable Online Sale</i></div>
<div class="c" style="left:853px;width:95px;"><i>Prorate On Sale</i></div>
<div class="c" style="left:948px;width:133px;"><i>Eligible for Awards</i></div>
<div class="c" style="left:1081px;width:125px;"><i>Eligible For Loyalty</i></div>
<div class="c" style="left:1206px;width:78px;"><i>Awards Percent</i></div>
<div class="c" style="left:1284px;width:77px;"><i>Club Display Sequence</i></div>
<div class="c" style="left:1361px;width:78px;"><i>Maximum Assignments</i></div>
<div class="c" style="left:1439px;width:77px;"><i>Show in Dist Email</i></div>
<div class="c" style="left:1516px;width:120px;"><i>Action</i></div>
</div>
<div class="row" style="top:30px;line-height:35px;background:#787878;border-bottom:1px solid #e9e9e9">
<div class="c" style="left:0px;width:95px;border-right-color:#d0d0d0;"><i>10650</i></div>
<div class="c" style="left:95px;width:95px;border-right-color:#d0d0d0;"><i>Alexa Membership</i></div>
<div class="c" style="left:190px;width:94px;border-right-color:#d0d0d0;padding-left:3px;"><i>with free green fees</i></div>
<div class="c" style="left:284px;width:95px;border-right-color:#d0d0d0;"><i>Yes</i></div>
<div class="c" style="left:379px;width:95px;border-right-color:#d0d0d0;"><i>Annually</i></div>
<div class="c" style="left:474px;width:95px;border-right-color:#d0d0d0;"><i>$2,500.00</i></div>
<div class="c" style="left:569px;width:94px;border-right-color:#d0d0d0;"><i>No Sales Tax</i></div>
<div class="c" style="left:663px;width:95px;border-right-color:#d0d0d0;"><i>$0.00</i></div>
<div class="c" style="left:758px;width:95px;border-right-color:#d0d0d0;"><i>Yes</i></div>
<div class="c" style="left:853px;width:95px;border-right-color:#d0d0d0;"><i>Yes</i></div>
<div class="c" style="left:948px;width:133px;border-right-color:#d0d0d0;"><i>No</i></div>
<div class="c" style="left:1081px;width:125px;border-right-color:#d0d0d0;"><i>No</i></div>
<div class="c" style="left:1206px;width:78px;border-right-color:#d0d0d0;"><i></i></div>
<div class="c" style="left:1284px;width:77px;border-right-color:#d0d0d0;"><i>-10</i></div>
<div class="c" style="left:1361px;width:78px;border-right-color:#d0d0d0;"><i></i></div>
<div class="c" style="left:1439px;width:77px;border-right-color:#d0d0d0;"><i>No</i></div>
<div class="c" style="left:1516px;width:120px;font-size:16px;font-weight:700;border-right-color:#787878;"><i>⋮</i></div>
</div>
<div class="row" style="top:65px;line-height:35px;background:#f5f5f5;border-bottom:1px solid #e9e9e9">
<div class="c" style="left:0px;width:95px;"><i>10593</i></div>
<div class="c" style="left:95px;width:95px;"><i>IframeClas</i></div>
<div class="c" style="left:190px;width:94px;"><i>Medium</i></div>
<div class="c" style="left:284px;width:95px;"><i>No</i></div>
<div class="c" style="left:379px;width:95px;"><i></i></div>
<div class="c" style="left:474px;width:95px;"><i></i></div>
<div class="c" style="left:569px;width:94px;"><i></i></div>
<div class="c" style="left:663px;width:95px;"><i></i></div>
<div class="c" style="left:758px;width:95px;"><i></i></div>
<div class="c" style="left:853px;width:95px;"><i></i></div>
<div class="c" style="left:948px;width:133px;"><i>No</i></div>
<div class="c" style="left:1081px;width:125px;"><i>No</i></div>
<div class="c" style="left:1206px;width:78px;"><i></i></div>
<div class="c" style="left:1284px;width:77px;"><i>-3</i></div>
<div class="c" style="left:1361px;width:78px;"><i></i></div>
<div class="c" style="left:1439px;width:77px;"><i>No</i></div>
<div class="c" style="left:1516px;width:120px;font-size:16px;font-weight:700;"><i>⋮</i></div>
</div>
<div class="row" style="top:100px;line-height:35px;background:#ffffff;border-bottom:1px solid #e9e9e9">
<div class="c" style="left:0px;width:95px;"><i>10594</i></div>
<div class="c" style="left:95px;width:95px;"><i>IframeMemberClass</i></div>
<div class="c" style="left:190px;width:94px;"><i>High</i></div>
<div class="c" style="left:284px;width:95px;"><i>Yes</i></div>
<div class="c" style="left:379px;width:95px;"><i>Monthly</i></div>
<div class="c" style="left:474px;width:95px;"><i>$1.00</i></div>
<div class="c" style="left:569px;width:94px;"><i>Test</i></div>
<div class="c" style="left:663px;width:95px;"><i>0.01%</i></div>
<div class="c" style="left:758px;width:95px;"><i>Yes</i></div>
<div class="c" style="left:853px;width:95px;"><i>No</i></div>
<div class="c" style="left:948px;width:133px;"><i>No</i></div>
<div class="c" style="left:1081px;width:125px;"><i>No</i></div>
<div class="c" style="left:1206px;width:78px;"><i></i></div>
<div class="c" style="left:1284px;width:77px;"><i>-3</i></div>
<div class="c" style="left:1361px;width:78px;"><i></i></div>
<div class="c" style="left:1439px;width:77px;"><i>No</i></div>
<div class="c" style="left:1516px;width:120px;font-size:16px;font-weight:700;"><i>⋮</i></div>
</div>
<div class="row" style="top:135px;line-height:35px;background:#f5f5f5;border-bottom:1px solid #e9e9e9">
<div class="c" style="left:0px;width:95px;"><i>10548</i></div>
<div class="c" style="left:95px;width:95px;"><i>Michigan CC Member</i></div>
<div class="c" style="left:190px;width:94px;"><i>MI Resident</i></div>
<div class="c" style="left:284px;width:95px;"><i>Yes</i></div>
<div class="c" style="left:379px;width:95px;"><i>Annually</i></div>
<div class="c" style="left:474px;width:95px;"><i>$1,000.00</i></div>
<div class="c" style="left:569px;width:94px;"><i>No Sales Tax</i></div>
<div class="c" style="left:663px;width:95px;"><i>0.00%</i></div>
<div class="c" style="left:758px;width:95px;"><i>Yes</i></div>
<div class="c" style="left:853px;width:95px;"><i>Yes</i></div>
<div class="c" style="left:948px;width:133px;"><i>No</i></div>
<div class="c" style="left:1081px;width:125px;"><i>No</i></div>
<div class="c" style="left:1206px;width:78px;"><i></i></div>
<div class="c" style="left:1284px;width:77px;"><i>-2</i></div>
<div class="c" style="left:1361px;width:78px;"><i></i></div>
<div class="c" style="left:1439px;width:77px;"><i>No</i></div>
<div class="c" style="left:1516px;width:120px;font-size:16px;font-weight:700;"><i>⋮</i></div>
</div>
<div class="row" style="top:170px;line-height:35px;background:#ffffff;border-bottom:1px solid #e9e9e9">
<div class="c" style="left:0px;width:95px;"><i>10537</i></div>
<div class="c" style="left:95px;width:95px;"><i>Mike Test</i></div>
<div class="c" style="left:190px;width:94px;"><i></i></div>
<div class="c" style="left:284px;width:95px;"><i>Yes</i></div>
<div class="c" style="left:379px;width:95px;"><i>Annually</i></div>
<div class="c" style="left:474px;width:95px;"><i>$0.00</i></div>
<div class="c" style="left:569px;width:94px;"><i>No Sales Tax</i></div>
<div class="c" style="left:663px;width:95px;"><i>$0.00</i></div>
<div class="c" style="left:758px;width:95px;"><i>Yes</i></div>
<div class="c" style="left:853px;width:95px;"><i>No</i></div>
<div class="c" style="left:948px;width:133px;"><i>No</i></div>
<div class="c" style="left:1081px;width:125px;"><i>No</i></div>
<div class="c" style="left:1206px;width:78px;"><i></i></div>
<div class="c" style="left:1284px;width:77px;"><i>-1</i></div>
<div class="c" style="left:1361px;width:78px;"><i></i></div>
<div class="c" style="left:1439px;width:77px;"><i>No</i></div>
<div class="c" style="left:1516px;width:120px;font-size:16px;font-weight:700;"><i>⋮</i></div>
</div>
<div class="row" style="top:205px;line-height:35px;background:#f5f5f5;border-bottom:1px solid #e9e9e9">
<div class="c" style="left:0px;width:95px;"><i>10489</i></div>
<div class="c" style="left:95px;width:95px;"><i>$0 1 sub</i></div>
<div class="c" style="left:190px;width:94px;"><i>1 sub</i></div>
<div class="c" style="left:284px;width:95px;"><i>Yes</i></div>
<div class="c" style="left:379px;width:95px;"><i>Annually</i></div>
<div class="c" style="left:474px;width:95px;"><i>$0.00</i></div>
<div class="c" style="left:569px;width:94px;"><i>Sales</i></div>
<div class="c" style="left:663px;width:95px;"><i>$0.00</i></div>
<div class="c" style="left:758px;width:95px;"><i>Yes</i></div>
<div class="c" style="left:853px;width:95px;"><i>No</i></div>
<div class="c" style="left:948px;width:133px;"><i>No</i></div>
<div class="c" style="left:1081px;width:125px;"><i>No</i></div>
<div class="c" style="left:1206px;width:78px;"><i></i></div>
<div class="c" style="left:1284px;width:77px;"><i>0</i></div>
<div class="c" style="left:1361px;width:78px;"><i></i></div>
<div class="c" style="left:1439px;width:77px;"><i>No</i></div>
<div class="c" style="left:1516px;width:120px;font-size:16px;font-weight:700;"><i>⋮</i></div>
</div>
<div class="row" style="top:240px;line-height:35px;background:#ffffff;border-bottom:1px solid #e9e9e9">
<div class="c" style="left:0px;width:95px;"><i>10488</i></div>
<div class="c" style="left:95px;width:95px;"><i>$0 3 Sub</i></div>
<div class="c" style="left:190px;width:94px;"><i>3 sub</i></div>
<div class="c" style="left:284px;width:95px;"><i>Yes</i></div>
<div class="c" style="left:379px;width:95px;"><i>Annually</i></div>
<div class="c" style="left:474px;width:95px;"><i>$0.00</i></div>
<div class="c" style="left:569px;width:94px;"><i>Sales</i></div>
<div class="c" style="left:663px;width:95px;"><i>$0.00</i></div>
<div class="c" style="left:758px;width:95px;"><i>Yes</i></div>
<div class="c" style="left:853px;width:95px;"><i>No</i></div>
<div class="c" style="left:948px;width:133px;"><i>No</i></div>
<div class="c" style="left:1081px;width:125px;"><i>No</i></div>
<div class="c" style="left:1206px;width:78px;"><i></i></div>
<div class="c" style="left:1284px;width:77px;"><i>0</i></div>
<div class="c" style="left:1361px;width:78px;"><i></i></div>
<div class="c" style="left:1439px;width:77px;"><i>No</i></div>
<div class="c" style="left:1516px;width:120px;font-size:16px;font-weight:700;"><i>⋮</i></div>
</div>
<div class="row" style="top:275px;line-height:35px;background:#f5f5f5;border-bottom:1px solid #e9e9e9">
<div class="c" style="left:0px;width:95px;"><i>80</i></div>
<div class="c" style="left:95px;width:95px;"><i>0$ Member</i></div>
<div class="c" style="left:190px;width:94px;"><i>0$ Member</i></div>
<div class="c" style="left:284px;width:95px;"><i>Yes</i></div>
<div class="c" style="left:379px;width:95px;"><i>Monthly</i></div>
<div class="c" style="left:474px;width:95px;"><i>$0.00</i></div>
<div class="c" style="left:569px;width:94px;"><i>Test</i></div>
<div class="c" style="left:663px;width:95px;"><i>$0.00</i></div>
<div class="c" style="left:758px;width:95px;"><i>Yes</i></div>
<div class="c" style="left:853px;width:95px;"><i>No</i></div>
<div class="c" style="left:948px;width:133px;"><i>No</i></div>
<div class="c" style="left:1081px;width:125px;"><i>No</i></div>
<div class="c" style="left:1206px;width:78px;"><i></i></div>
<div class="c" style="left:1284px;width:77px;"><i>0</i></div>
<div class="c" style="left:1361px;width:78px;"><i></i></div>
<div class="c" style="left:1439px;width:77px;"><i>No</i></div>
<div class="c" style="left:1516px;width:120px;font-size:16px;font-weight:700;"><i>⋮</i></div>
</div>
<div class="row" style="top:310px;line-height:35px;background:#ffffff;border-bottom:1px solid #e9e9e9">
<div class="c" style="left:0px;width:95px;"><i>10581</i></div>
<div class="c" style="left:95px;width:95px;"><i>10.30.24 Test</i></div>
<div class="c" style="left:190px;width:94px;"><i></i></div>
<div class="c" style="left:284px;width:95px;"><i>Yes</i></div>
<div class="c" style="left:379px;width:95px;"><i>Annually</i></div>
<div class="c" style="left:474px;width:95px;"><i>$0.00</i></div>
<div class="c" style="left:569px;width:94px;"><i>2025 Tax Rate</i></div>
<div class="c" style="left:663px;width:95px;"><i>$0.00</i></div>
<div class="c" style="left:758px;width:95px;"><i>No</i></div>
<div class="c" style="left:853px;width:95px;"><i>No</i></div>
<div class="c" style="left:948px;width:133px;"><i>No</i></div>
<div class="c" style="left:1081px;width:125px;"><i>No</i></div>
<div class="c" style="left:1206px;width:78px;"><i></i></div>
<div class="c" style="left:1284px;width:77px;"><i>0</i></div>
<div class="c" style="left:1361px;width:78px;"><i></i></div>
<div class="c" style="left:1439px;width:77px;"><i>No</i></div>
<div class="c" style="left:1516px;width:120px;font-size:16px;font-weight:700;"><i>⋮</i></div>
</div>
<div class="row" style="top:345px;line-height:35px;background:#f5f5f5;border-bottom:1px solid #e9e9e9">
<div class="c" style="left:0px;width:95px;"><i>10583</i></div>
<div class="c" style="left:95px;width:95px;"><i>11.1 Annual test</i></div>
<div class="c" style="left:190px;width:94px;"><i></i></div>
<div class="c" style="left:284px;width:95px;"><i>Yes</i></div>
<div class="c" style="left:379px;width:95px;"><i>Annually</i></div>
<div class="c" style="left:474px;width:95px;"><i>$100.00</i></div>
<div class="c" style="left:569px;width:94px;"><i>Sales</i></div>
<div class="c" style="left:663px;width:95px;"><i>0.00%</i></div>
<div class="c" style="left:758px;width:95px;"><i>No</i></div>
<div class="c" style="left:853px;width:95px;"><i>Yes</i></div>
<div class="c" style="left:948px;width:133px;"><i>No</i></div>
<div class="c" style="left:1081px;width:125px;"><i>No</i></div>
<div class="c" style="left:1206px;width:78px;"><i></i></div>
<div class="c" style="left:1284px;width:77px;"><i>0</i></div>
<div class="c" style="left:1361px;width:78px;"><i></i></div>
<div class="c" style="left:1439px;width:77px;"><i>No</i></div>
<div class="c" style="left:1516px;width:120px;font-size:16px;font-weight:700;"><i>⋮</i></div>
</div>
<div class="row" style="top:380px;line-height:35px;background:#ffffff;border-bottom:1px solid #e9e9e9">
<div class="c" style="left:0px;width:95px;"><i>10582</i></div>
<div class="c" style="left:95px;width:95px;"><i>11.1 test 1.14</i></div>
<div class="c" style="left:190px;width:94px;"><i></i></div>
<div class="c" style="left:284px;width:95px;"><i>Yes</i></div>
<div class="c" style="left:379px;width:95px;"><i>Quarterly</i></div>
<div class="c" style="left:474px;width:95px;"><i>$100.00</i></div>
<div class="c" style="left:569px;width:94px;"><i>No Sales Tax</i></div>
<div class="c" style="left:663px;width:95px;"><i>0.00%</i></div>
<div class="c" style="left:758px;width:95px;"><i>Yes</i></div>
<div class="c" style="left:853px;width:95px;"><i>Yes</i></div>
<div class="c" style="left:948px;width:133px;"><i>No</i></div>
<div class="c" style="left:1081px;width:125px;"><i>No</i></div>
<div class="c" style="left:1206px;width:78px;"><i></i></div>
<div class="c" style="left:1284px;width:77px;"><i>0</i></div>
<div class="c" style="left:1361px;width:78px;"><i></i></div>
<div class="c" style="left:1439px;width:77px;"><i>No</i></div>
<div class="c" style="left:1516px;width:120px;font-size:16px;font-weight:700;"><i>⋮</i></div>
</div>
<div class="row" style="top:415px;line-height:35px;background:#f5f5f5;border-bottom:1px solid #e9e9e9">
<div class="c" style="left:0px;width:95px;"><i>340</i></div>
<div class="c" style="left:95px;width:95px;"><i>2 Cart Sheds</i></div>
<div class="c" style="left:190px;width:94px;"><i></i></div>
<div class="c" style="left:284px;width:95px;"><i>Yes</i></div>
<div class="c" style="left:379px;width:95px;"><i>Monthly</i></div>
<div class="c" style="left:474px;width:95px;"><i>$20.00</i></div>
<div class="c" style="left:569px;width:94px;"><i>Test</i></div>
<div class="c" style="left:663px;width:95px;"><i>$0.00</i></div>
<div class="c" style="left:758px;width:95px;"><i>Yes</i></div>
<div class="c" style="left:853px;width:95px;"><i>Yes</i></div>
<div class="c" style="left:948px;width:133px;"><i>No</i></div>
<div class="c" style="left:1081px;width:125px;"><i>No</i></div>
<div class="c" style="left:1206px;width:78px;"><i></i></div>
<div class="c" style="left:1284px;width:77px;"><i>0</i></div>
<div class="c" style="left:1361px;width:78px;"><i></i></div>
<div class="c" style="left:1439px;width:77px;"><i>No</i></div>
<div class="c" style="left:1516px;width:120px;font-size:16px;font-weight:700;"><i>⋮</i></div>
</div>
<div class="row" style="top:450px;line-height:35px;background:#ffffff;border-bottom:1px solid #e9e9e9">
<div class="c" style="left:0px;width:95px;"><i>252</i></div>
<div class="c" style="left:95px;width:95px;"><i>2020 Wentzville with cart</i></div>
<div class="c" style="left:190px;width:94px;"><i>Cart Included</i></div>
<div class="c" style="left:284px;width:95px;"><i>Yes</i></div>
<div class="c" style="left:379px;width:95px;"><i>Annually</i></div>
<div class="c" style="left:474px;width:95px;"><i>$2,698.23</i></div>
<div class="c" style="left:569px;width:94px;"><i>Test</i></div>
<div class="c" style="left:663px;width:95px;"><i>$0.00</i></div>
<div class="c" style="left:758px;width:95px;"><i>Yes</i></div>
<div class="c" style="left:853px;width:95px;"><i>No</i></div>
<div class="c" style="left:948px;width:133px;"><i>No</i></div>
<div class="c" style="left:1081px;width:125px;"><i>No</i></div>
<div class="c" style="left:1206px;width:78px;"><i></i></div>
<div class="c" style="left:1284px;width:77px;"><i>0</i></div>
<div class="c" style="left:1361px;width:78px;"><i></i></div>
<div class="c" style="left:1439px;width:77px;"><i>No</i></div>
<div class="c" style="left:1516px;width:120px;font-size:16px;font-weight:700;"><i>⋮</i></div>
</div>
<div class="row" style="top:485px;line-height:35px;background:#f5f5f5;border-bottom:1px solid #e9e9e9">
<div class="c" style="left:0px;width:95px;"><i>253</i></div>
<div class="c" style="left:95px;width:95px;"><i>2020 Wentzville without cart</i></div>
<div class="c" style="left:190px;width:94px;"><i>Green Fees Only</i></div>
<div class="c" style="left:284px;width:95px;"><i>Yes</i></div>
<div class="c" style="left:379px;width:95px;"><i>Annually</i></div>
<div class="c" style="left:474px;width:95px;"><i>$2,223.23</i></div>
<div class="c" style="left:569px;width:94px;"><i>Test</i></div>
<div class="c" style="left:663px;width:95px;"><i>$0.00</i></div>
<div class="c" style="left:758px;width:95px;"><i>Yes</i></div>
<div class="c" style="left:853px;width:95px;"><i>No</i></div>
<div class="c" style="left:948px;width:133px;"><i>No</i></div>
<div class="c" style="left:1081px;width:125px;"><i>No</i></div>
<div class="c" style="left:1206px;width:78px;"><i></i></div>
<div class="c" style="left:1284px;width:77px;"><i>0</i></div>
<div class="c" style="left:1361px;width:78px;"><i></i></div>
<div class="c" style="left:1439px;width:77px;"><i>No</i></div>
<div class="c" style="left:1516px;width:120px;font-size:16px;font-weight:700;"><i>⋮</i></div>
</div>
<div class="row" style="top:520px;line-height:35px;background:#ffffff;border-bottom:1px solid #e9e9e9">
<div class="c" style="left:0px;width:95px;"><i>122</i></div>
<div class="c" style="left:95px;width:95px;"><i>2023 Promo</i></div>
<div class="c" style="left:190px;width:94px;"><i></i></div>
<div class="c" style="left:284px;width:95px;"><i>Yes</i></div>
<div class="c" style="left:379px;width:95px;"><i>Monthly</i></div>
<div class="c" style="left:474px;width:95px;"><i>$230.00</i></div>
<div class="c" style="left:569px;width:94px;"><i>Test</i></div>
<div class="c" style="left:663px;width:95px;"><i>$0.00</i></div>
<div class="c" style="left:758px;width:95px;"><i>Yes</i></div>
<div class="c" style="left:853px;width:95px;"><i>No</i></div>
<div class="c" style="left:948px;width:133px;"><i>No</i></div>
<div class="c" style="left:1081px;width:125px;"><i>No</i></div>
<div class="c" style="left:1206px;width:78px;"><i></i></div>
<div class="c" style="left:1284px;width:77px;"><i>0</i></div>
<div class="c" style="left:1361px;width:78px;"><i></i></div>
<div class="c" style="left:1439px;width:77px;"><i>No</i></div>
<div class="c" style="left:1516px;width:120px;font-size:16px;font-weight:700;"><i>⋮</i></div>
</div>
<div class="row" style="top:555px;line-height:35px;background:#f5f5f5;border-bottom:1px solid #e9e9e9">
<div class="c" style="left:0px;width:95px;"><i>10549</i></div>
<div class="c" style="left:95px;width:95px;"><i>2024 Annual Range</i></div>
<div class="c" style="left:190px;width:94px;"><i>2024 Test</i></div>
<div class="c" style="left:284px;width:95px;"><i>Yes</i></div>
<div class="c" style="left:379px;width:95px;"><i>Annually</i></div>
<div class="c" style="left:474px;width:95px;"><i>$650.00</i></div>
<div class="c" style="left:569px;width:94px;"><i>No Sales Tax</i></div>
<div class="c" style="left:663px;width:95px;"><i>0.00%</i></div>
<div class="c" style="left:758px;width:95px;"><i>Yes</i></div>
<div class="c" style="left:853px;width:95px;"><i>Yes</i></div>
<div class="c" style="left:948px;width:133px;"><i>No</i></div>
<div class="c" style="left:1081px;width:125px;"><i>No</i></div>
<div class="c" style="left:1206px;width:78px;"><i></i></div>
<div class="c" style="left:1284px;width:77px;"><i>0</i></div>
<div class="c" style="left:1361px;width:78px;"><i></i></div>
<div class="c" style="left:1439px;width:77px;"><i>No</i></div>
<div class="c" style="left:1516px;width:120px;font-size:16px;font-weight:700;"><i>⋮</i></div>
</div>
<div class="abs" style="left:1641px;top:31px;width:7px;height:49px;background:#a9a9a9;border-radius:4px"></div>
</div>
<div class="menu">
<div class="mi" style="top:1px;background:#dedede;top:0;height:31px;line-height:34px;">Edit Class</div>
<div class="mi" style="top:32px;">Minimum Spend Rule</div>
<div class="mi" style="top:62px;">Discount Type</div>
<div class="mi" style="top:93px;">Set Chart of Account</div>
<div class="mi" style="top:124px;">Archive</div>
<div class="mi" style="top:154px;">Additional Settings</div>
<div class="mi" style="top:185px;">Sale Strategy</div>
<div class="mi" style="top:215px;">Terms And Conditions</div>
<div class="mi" style="top:246px;">Cancellation Policy</div>
<div class="mi" style="top:277px;">Expiration Strategy</div>
<div class="mi" style="top:303px;">Advance Billing</div>
</div>
<svg class="abs" style="left:1580px;top:300px" width="339" height="130" viewBox="1580 300 339 130"><defs><filter id="sh" x="-10%" y="-10%" width="130%" height="140%"><feGaussianBlur in="SourceAlpha" stdDeviation="2.5"/><feOffset dx="3" dy="4"/><feComponentTransfer><feFuncA type="linear" slope="0.55"/></feComponentTransfer><feMerge><feMergeNode/><feMergeNode in="SourceGraphic"/></feMerge></filter></defs><g filter="url(#sh)"><rect x="1596.3" y="325.2" width="277.5" height="85.4" fill="none" stroke="#fa4045" stroke-width="6"/><path d="M1844.5 318.5 Q1844.6 314.6 1848.4 314.6 Q1852.2 314.7 1851.9 318.5 L1848 347.4 L1855.1 346.5 L1840 367.4 L1832.9 348.3 L1840.9 347.9 Z" fill="#fa4045"/></g></svg>
<svg class="abs" style="left:1660px;top:927px" width="22" height="22" viewBox="0 0 22 22"><g fill="#111"><ellipse cx="7.5" cy="4" rx="7.2" ry="3.2"/><path d="M0.3 6.3 Q7.5 10.6 14.7 6.3 V9.5 Q7.5 13.8 0.3 9.5 Z"/><path d="M0.3 11.3 Q7.5 15.6 14.7 11.3 V14.5 Q7.5 18.8 0.3 14.5 Z"/></g><g stroke="#fff" stroke-width="0.9" fill="none"><path d="M0.3 6.1 Q7.5 10.4 14.7 6.1 M0.3 11.1 Q7.5 15.4 14.7 11.1"/></g><circle cx="15.7" cy="15.8" r="5.7" fill="#111" stroke="#fff" stroke-width="1.3"/><path d="M15.7 12.6 V18.8 M13.1 16.4 L15.7 19 L18.3 16.4" fill="none" stroke="#fff" stroke-width="1.5"/></svg>
<svg class="abs" style="left:1703px;top:927px" width="22" height="22" viewBox="0 0 22 22"><g fill="#111"><ellipse cx="7.5" cy="4" rx="7.2" ry="3.2"/><path d="M0.3 6.3 Q7.5 10.6 14.7 6.3 V9.5 Q7.5 13.8 0.3 9.5 Z"/><path d="M0.3 11.3 Q7.5 15.6 14.7 11.3 V14.5 Q7.5 18.8 0.3 14.5 Z"/></g><g stroke="#fff" stroke-width="0.9" fill="none"><path d="M0.3 6.1 Q7.5 10.4 14.7 6.1 M0.3 11.1 Q7.5 15.4 14.7 11.1"/></g><circle cx="15.7" cy="15.8" r="5.7" fill="#111" stroke="#fff" stroke-width="1.3"/><path d="M15.7 19 V12.8 M13.1 15.2 L15.7 12.6 L18.3 15.2" fill="none" stroke="#fff" stroke-width="1.5"/></svg>
<div class="abs" style="left:1745px;top:923px;width:160px;height:30px;background:#2d2926;border-radius:3px"></div>
<svg class="abs" style="left:1764.7px;top:929.8px" width="20.2" height="17" viewBox="0 0 21 18"><rect x="0.8" y="2.3" width="19.4" height="14.9" rx="1.3" fill="none" stroke="#fff" stroke-width="1.2"/><path d="M0.8 5.8 H20.2 M6.5 0.5 V4 M14.5 0.5 V4" stroke="#fff" stroke-width="1.2"/><path d="M6.5 9.3 H16.5 M6.5 12.8 H16.5" stroke="#fff" stroke-width="1.5"/><path d="M4 9.3 h1 M4 12.8 h1" stroke="#fff" stroke-width="1.3"/></svg>
<div class="abs" style="left:1805px;top:923px;line-height:31px;font-size:13px;font-weight:700;color:#fff;transform:scaleX(.88);transform-origin:0 50%">Export All</div>
</body></html>
